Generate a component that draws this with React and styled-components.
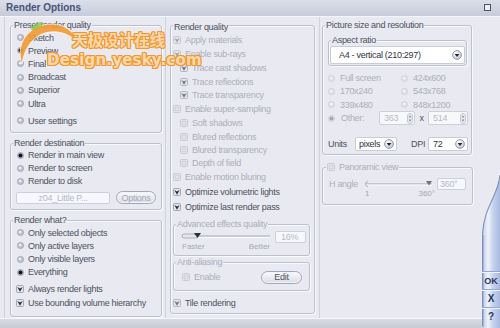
import React from 'react';
import styled, { createGlobalStyle } from 'styled-components';

const C = {
  bg: '#e9eaf1',
  text: '#4d515e',
  dis: '#abaebb',
};

const GlobalStyle = createGlobalStyle`
  html, body { margin: 0; padding: 0; background: ${C.bg}; }
  body { font-family: "Liberation Sans", Arial, sans-serif; }
`;

const Window = styled.div`
  position: relative;
  width: 500px;
  height: 328px;
  overflow: hidden;
  background: ${C.bg};
  display: flex;
  flex-direction: column;
  font-family: "Liberation Sans", Arial, sans-serif;
  font-size: 9px;
  letter-spacing: -0.3px;
  color: ${C.text};
`;

const TitleBar = styled.div`
  height: 17px;
  flex: none;
  box-sizing: border-box;
  display: flex;
  align-items: center;
  justify-content: space-between;
  padding: 0 9px 1px 6px;
  background: linear-gradient(#dcdfea, #c7cbda);
  border-bottom: 1px solid #f4f5f9;
`;

const Title = styled.span`
  font-size: 10px;
  font-weight: bold;
  letter-spacing: 0;
  color: #47527a;
`;

const Body = styled.div`
  flex: 1;
  display: flex;
  min-height: 0;
`;

const Content = styled.div`
  flex: 1;
  display: flex;
  flex-direction: column;
`;

const Columns = styled.div`
  flex: 1;
  display: flex;
  padding-left: 4px;
`;

const Column = styled.div`
  flex: none;
  width: ${(p) => p.$w}px;
  box-sizing: border-box;
  border-left: 1px solid #d0d2dc;
  padding: 8px ${(p) => p.$pr}px 0 ${(p) => p.$pl}px;
  display: flex;
  flex-direction: column;
`;

const BottomStrip = styled.div`
  flex: none;
  height: 9px;
  border-top: 1px solid #f6f7fa;
  background: linear-gradient(#d9dbe4, #c8cad5);
`;

const Group = styled.div`
  border: 1px solid #bdc0cd;
  border-radius: 3px;
  box-shadow: inset 1px 1px 0 #f8f9fb, 1px 1px 0 #f8f9fb;
  margin: ${(p) => p.$m || '0'};
  padding: ${(p) => p.$p || '0'};
`;

const Legend = styled.div`
  width: fit-content;
  height: 11px;
  line-height: 11px;
  margin: -6px 0 0 ${(p) => p.$ml ?? 2}px;
  padding: 0 1px;
  background: ${C.bg};
  color: ${(p) => (p.$dis ? C.dis : C.text)};
  white-space: nowrap;
  display: flex;
  align-items: center;
  gap: 4px;
`;

const Row = styled.div`
  display: flex;
  align-items: center;
  gap: ${(p) => p.$gap ?? 4}px;
  height: ${(p) => p.$h ?? 13}px;
  margin-top: ${(p) => p.$mt ?? 0}px;
  padding-left: ${(p) => p.$pl ?? 0}px;
  padding-right: ${(p) => p.$pr ?? 0}px;
  color: ${(p) => (p.$dis ? C.dis : C.text)};
  white-space: nowrap;
`;

const RadioGrid = styled.div`
  display: grid;
  grid-template-columns: 73px 1fr;
  grid-auto-rows: 13.3px;
  margin-top: 5.5px;
  padding-left: 5px;
`;

const Label = styled.span`
  flex: none;
  width: ${(p) => (p.$w ? p.$w + 'px' : 'auto')};
  margin-left: ${(p) => p.$ml ?? 0}px;
  text-align: ${(p) => p.$align || 'left'};
  color: ${(p) => (p.$dis ? C.dis : 'inherit')};
`;

const Field = styled.div`
  flex: none;
  box-sizing: border-box;
  width: ${(p) => p.$w}px;
  height: ${(p) => p.$h ?? 13}px;
  margin-top: ${(p) => p.$mt ?? 0}px;
  background: #f7f8fb;
  border: 1px solid #cdd0da;
  border-radius: 2px;
  display: flex;
  align-items: center;
  justify-content: ${(p) => (p.$center ? 'center' : 'space-between')};
  padding: 0 1px 0 ${(p) => p.$pl ?? 4}px;
  color: ${(p) => (p.$dis ? '#b6b9c4' : C.text)};
`;

const Select = styled.div`
  flex: none;
  box-sizing: border-box;
  width: ${(p) => (p.$w ? p.$w + 'px' : 'auto')};
  height: ${(p) => p.$h ?? 14}px;
  margin: ${(p) => p.$m || '0'};
  background: #ffffff;
  border: 1px solid #c9ccd7;
  border-radius: 2px;
  display: flex;
  align-items: center;
  justify-content: space-between;
  padding: 0 2px 0 ${(p) => p.$pl ?? 4}px;
  color: #30343f;
`;

const Pill = styled.div`
  flex: none;
  box-sizing: border-box;
  width: ${(p) => p.$w}px;
  height: 13px;
  border-radius: 7px;
  border: 1px solid #a2a7b7;
  background: linear-gradient(#fbfbfd, #d9dce6);
  box-shadow: inset 0 0 0 1px #f3f4f8;
  display: flex;
  align-items: center;
  justify-content: center;
  margin-left: ${(p) => (p.$auto ? 'auto' : '0')};
  color: ${(p) => (p.$dis ? '#a5a8b5' : '#50545f')};
`;

const AdvGrid = styled.div`
  display: flex;
  align-items: flex-start;
  gap: 3px;
  padding: 0 5px 4px 6px;
`;

const SliderArea = styled.div`
  flex: none;
  width: ${(p) => p.$w}px;
  display: flex;
  flex-direction: column;
`;

const SliderLabels = styled.div`
  display: flex;
  justify-content: space-between;
  height: ${(p) => p.$h ?? 9}px;
  line-height: ${(p) => p.$h ?? 9}px;
  padding: 0 ${(p) => p.$pad ?? 2}px;
  font-size: 8px;
  letter-spacing: 0;
  color: #a4a7b4;
`;

const HRow = styled.div`
  display: flex;
  align-items: flex-start;
  margin-top: 5px;
  padding: 0 0 6px 6px;
  color: ${C.dis};
`;

const HLabel = styled.span`
  flex: none;
  width: 34px;
  height: 12px;
  line-height: 12px;
`;

const SideBar = styled.div`
  flex: none;
  width: 18px;
  display: flex;
  flex-direction: column;
`;

const BarTop = styled.svg`
  display: block;
  flex: none;
  margin-top: auto;
  width: 18px;
  height: 60px;
`;

const BarBody = styled.div`
  flex: none;
  height: 93px;
  box-sizing: border-box;
  padding-bottom: 3px;
  display: flex;
  flex-direction: column;
  justify-content: flex-end;
  background: linear-gradient(90deg, #7f92bd 0, #7f92bd 1px, #c8d4ec 2px, #eef3fb 6px, #c6d3ed 11px, #a8bae0 18px);
  border-bottom-left-radius: 3px;
`;

const BarButton = styled.div`
  height: 18px;
  box-sizing: border-box;
  display: flex;
  align-items: center;
  justify-content: center;
  font-weight: bold;
  font-size: ${(p) => p.$fs ?? 9}px;
  letter-spacing: 0;
  color: #2b3961;
  border-top: 1px solid #95a7cf;
  box-shadow: inset 0 1px 0 #f2f5fc;
`;

const IconSvg = styled.svg`
  display: block;
  flex: none;
  width: ${(p) => p.$w}px;
  height: ${(p) => p.$h}px;
`;

const Watermark = styled.div`
  position: absolute;
  left: 0;
  top: 0;
  width: 200px;
  height: 80px;
  pointer-events: none;
  letter-spacing: 0;
`;

const WmSwoosh = styled.svg`
  position: absolute;
  left: 0;
  top: 0;
`;

const WmText = styled.div`
  position: absolute;
  left: ${(p) => p.$x}px;
  top: ${(p) => p.$y}px;
  font-family: ${(p) => (p.$cn ? '"Noto Sans CJK SC", sans-serif' : '"DejaVu Sans", sans-serif')};
  font-weight: bold;
  font-size: ${(p) => p.$fs}px;
  line-height: 1;
  letter-spacing: ${(p) => p.$ls ?? 0}px;
  color: #fbd9ad;
  text-shadow: 1px 0 0 #f2972e, -1px 0 0 #f2972e, 0 1px 0 #f2972e, 0 -1px 0 #f2972e,
    1px 1px 0 #f2972e, -1px -1px 0 #f2972e, 1px -1px 0 #f2972e, -1px 1px 0 #f2972e;
  white-space: nowrap;
`;

function Radio({ checked, dis }) {
  return (
    <IconSvg $w={7} $h={7} viewBox="0 0 8 8">
      <circle cx="4" cy="4" r="3.5" fill={dis ? '#dfe1e8' : '#bfc3ce'} stroke={dis ? '#c8cbd5' : '#959aab'} strokeWidth="0.8" />
      {checked ? (
        <circle cx="4" cy="4" r="2.3" fill={dis ? '#a3a7b4' : '#12151f'} />
      ) : (
        <circle cx="3.4" cy="3.4" r="1.5" fill={dis ? '#f3f4f7' : '#eef0f4'} />
      )}
    </IconSvg>
  );
}

const TONES = {
  dark: { mark: '#262a38', box: '#9aa0b0' },
  mid: { mark: '#6d7180', box: '#aeb2bf' },
  light: { mark: '#9da1ae', box: '#c3c6d0' },
};

function Check({ checked, tone = 'dark' }) {
  const t = TONES[tone];
  return (
    <IconSvg $w={8} $h={8} viewBox="0 0 8 8">
      <rect x="0.5" y="0.5" width="7" height="7" rx="1" fill={checked ? '#e2e4ea' : '#e4e6ec'} stroke={checked ? t.box : '#c4c7d1'} strokeWidth="0.9" />
      {checked ? (
        <path d="M1.3 2 L4 3.5 L6.7 2 L4 6.8 Z" fill={t.mark} />
      ) : (
        <rect x="2.2" y="2.2" width="3.6" height="3.6" fill="none" stroke="#c9ccd5" strokeWidth="0.8" />
      )}
    </IconSvg>
  );
}

function Drop() {
  return (
    <IconSvg $w={10} $h={10} viewBox="0 0 10 10">
      <defs>
        <radialGradient id="dropg" cx="0.35" cy="0.3" r="0.8">
          <stop offset="0" stopColor="#ffffff" />
          <stop offset="1" stopColor="#bfc4d2" />
        </radialGradient>
      </defs>
      <circle cx="5" cy="5" r="4.4" fill="url(#dropg)" stroke="#7d8398" strokeWidth="0.8" />
      <path d="M2.7 4 H7.3 L5 6.9 Z" fill="#1e2332" />
    </IconSvg>
  );
}

function Spin() {
  return (
    <IconSvg $w={6} $h={11} viewBox="0 0 6 11">
      <rect x="0.5" y="0.5" width="5" height="10" rx="2.5" fill="#eceef3" stroke="#b9bcc8" strokeWidth="0.8" />
      <path d="M1.6 4.6 L3 2.3 L4.4 4.6 Z M1.6 6.4 L3 8.7 L4.4 6.4 Z" fill="#878b9a" />
    </IconSvg>
  );
}

function AdvSlider() {
  return (
    <IconSvg $w={92} $h={12} viewBox="0 0 92 12">
      <rect x="2" y="5" width="88" height="2" fill="#c8cbd5" />
      <rect x="2" y="7" width="88" height="1" fill="#fafbfc" />
      <rect x="2" y="4" width="16" height="4" rx="2" fill="#e4e6ec" stroke="#9da1af" strokeWidth="0.8" />
      <path d="M14 3 H21 L17.5 8 Z" fill="#2a2e3c" />
    </IconSvg>
  );
}

function HSlider() {
  return (
    <IconSvg $w={73} $h={12} viewBox="0 0 73 12">
      <rect x="3" y="5" width="66" height="1.6" fill="#c4c7d1" />
      <rect x="3" y="6.6" width="66" height="1" fill="#fafbfc" />
      <path d="M5 3.5 A2.5 2.5 0 1 0 5 8.5" fill="none" stroke="#a9acb8" strokeWidth="0.9" />
      <path d="M63 3 H69 L66 7.5 Z" fill="#6e7282" />
    </IconSvg>
  );
}

function WindowIcon() {
  return (
    <IconSvg $w={7} $h={7} viewBox="0 0 7 7">
      <rect x="0.5" y="0.5" width="6" height="6" fill="#eef0f5" stroke="#4c5166" strokeWidth="1" />
    </IconSvg>
  );
}

function Swoosh() {
  return (
    <WmSwoosh width="90" height="70" viewBox="0 0 90 70">
      <path
        d="M22 64 C15 46 27 24 52 24 C64 24 74 31 78 42 C70 35 61 31 51 32 C35 33 25 46 22 64 Z"
        fill="#f39b34"
        stroke="#ffffff"
        strokeWidth="0.8"
        opacity="0.9"
      />
      <ellipse cx="37" cy="26" rx="7" ry="2.6" transform="rotate(-28 37 26)" fill="#8cc63f" opacity="0.75" />
    </WmSwoosh>
  );
}

const PRESETS = ['Sketch', 'Preview', 'Final', 'Broadcast', 'Superior', 'Ultra'];

const QUALITY = [
  { t: 'Apply materials', h: 14, c: true, tone: 'light', dis: true },
  { t: 'Enable sub-rays', h: 14, c: true, tone: 'light', dis: true },
  { t: 'Trace cast shadows', h: 14, c: true, tone: 'mid', dis: true, ind: true },
  { t: 'Trace reflections', h: 13, c: true, tone: 'mid', dis: true, ind: true },
  { t: 'Trace transparency', h: 14, c: true, tone: 'mid', dis: true, ind: true },
  { t: 'Enable super-sampling', h: 14, c: false, dis: true },
  { t: 'Soft shadows', h: 14, c: false, dis: true, ind: true },
  { t: 'Blured reflections', h: 13, c: false, dis: true, ind: true },
  { t: 'Blured transparency', h: 13, c: false, dis: true, ind: true },
  { t: 'Depth of field', h: 13, c: false, dis: true, ind: true },
  { t: 'Enable motion bluring', h: 15, c: false, dis: true },
  { t: 'Optimize volumetric lights', h: 15, c: true, tone: 'dark' },
  { t: 'Optimize last render pass', h: 15, c: true, tone: 'dark' },
];

const SIZES = [
  ['Full screen', '424x600'],
  ['170x240', '543x768'],
  ['339x480', '848x1200'],
];

export default function App() {
  return (
    <>
      <GlobalStyle />
      <Window>
        <TitleBar>
          <Title>Render Options</Title>
          <WindowIcon />
        </TitleBar>
        <Body>
          <Content>
            <Columns>
              <Column $w={161} $pl={5} $pr={3}>
                <Group $p="0 0 4.6px 0">
                  <Legend>Preset render quality</Legend>
                  {PRESETS.map((p) => (
                    <Row key={p} $h={13.2} $pl={6}>
                      <Radio checked={p === 'Preview'} />
                      {p}
                    </Row>
                  ))}
                  <Row $h={13.2} $mt={4} $pl={6}>
                    <Radio />
                    User settings
                  </Row>
                </Group>

                <Group $m="10px 0 0 0" $p="0 0 5px 0">
                  <Legend>Render destination</Legend>
                  <Row $pl={6}>
                    <Radio checked />
                    Render in main view
                  </Row>
                  <Row $pl={6}>
                    <Radio />
                    Render to screen
                  </Row>
                  <Row $pl={6}>
                    <Radio />
                    Render to disk
                  </Row>
                  <Row $h={12} $mt={4} $pl={5} $pr={5} $gap={6}>
                    <Field $w={94} $h={12} $center $pl={1} $dis>
                      z04_Little P...
                    </Field>
                    <Pill $w={40} $dis $auto>
                      Options
                    </Pill>
                  </Row>
                </Group>

                <Group $m="10px 0 0 0" $p="0 0 6px 0">
                  <Legend>Render what?</Legend>
                  {['Only selected objects', 'Only active layers', 'Only visible layers', 'Everything'].map((t) => (
                    <Row key={t} $h={13.3} $pl={6}>
                      <Radio checked={t === 'Everything'} />
                      {t}
                    </Row>
                  ))}
                  <Row $h={14} $mt={3} $pl={5}>
                    <Check checked />
                    Always render lights
                  </Row>
                  <Row $h={14} $pl={5}>
                    <Check checked />
                    Use bounding volume hierarchy
                  </Row>
                </Group>
              </Column>

              <Column $w={154} $pl={4} $pr={4}>
                <Group $p="2px 0 3px 0">
                  <Legend>Render quality</Legend>
                  {QUALITY.map((q) => (
                    <Row key={q.t} $h={q.h} $pl={q.ind ? 9 : 2} $dis={q.dis}>
                      <Check checked={q.c} tone={q.tone} />
                      {q.t}
                    </Row>
                  ))}
                  <Group $m="10px 4px 0 2px">
                    <Legend $dis>Advanced effects quality</Legend>
                    <AdvGrid>
                      <SliderArea $w={92}>
                        <AdvSlider />
                        <SliderLabels>
                          <span>Faster</span>
                          <span>Better</span>
                        </SliderLabels>
                      </SliderArea>
                      <Field $w={31} $h={12} $pl={5} $mt={1} $dis>
                        16%
                      </Field>
                    </AdvGrid>
                  </Group>
                  <Group $m="6px 4px 0 2px" $p="0 0 4px 0">
                    <Legend $dis>Anti-aliasing</Legend>
                    <Row $h={18} $pl={8} $pr={7} $dis>
                      <Check />
                      Enable
                      <Pill $w={41} $auto>
                        Edit
                      </Pill>
                    </Row>
                  </Group>
                  <Row $h={14} $mt={5} $pl={2}>
                    <Check checked tone="mid" />
                    Tile rendering
                  </Row>
                </Group>
              </Column>

              <Column $w={163} $pl={2} $pr={10}>
                <Group $p="0 0 3.5px 0">
                  <Legend>Picture size and resolution</Legend>
                  <Group $m="9px 4px 0 5px" $p="0 1px 1px 1px">
                    <Legend $ml={1}>Aspect ratio</Legend>
                    <Select $h={18} $pl={8}>
                      A4 - vertical (210:297)
                      <Drop />
                    </Select>
                  </Group>
                  <RadioGrid>
                    {SIZES.flat().map((s) => (
                      <Row key={s} $h={13.3} $gap={5} $dis>
                        <Radio dis />
                        {s}
                      </Row>
                    ))}
                  </RadioGrid>
                  <Row $h={14} $pl={5} $gap={0}>
                    <Radio checked dis />
                    <Label $w={38} $ml={6} $dis>
                      Other:
                    </Label>
                    <Field $w={36} $h={14} $dis>
                      363
                      <Spin />
                    </Field>
                    <Label $w={13} $align="center">
                      x
                    </Label>
                    <Field $w={40} $h={14} $dis>
                      514
                      <Spin />
                    </Field>
                  </Row>
                  <Row $h={14} $mt={11.3} $pl={5} $gap={0}>
                    <Label $w={27}>Units</Label>
                    <Select $w={42} $h={14} $pl={3}>
                      pixels
                      <Drop />
                    </Select>
                    <Label $w={17} $ml={14}>
                      DPI
                    </Label>
                    <Select $w={40} $h={14} $pl={4}>
                      72
                      <Drop />
                    </Select>
                  </Row>
                </Group>

                <Group $m="11.5px -1px 0 0">
                  <Legend $dis $ml={3}>
                    <Check />
                    Panoramic view
                  </Legend>
                  <HRow>
                    <HLabel>H angle</HLabel>
                    <SliderArea $w={74}>
                      <HSlider />
                      <SliderLabels $h={8} $pad={2}>
                        <span>1</span>
                        <span>360°</span>
                      </SliderLabels>
                    </SliderArea>
                    <Field $w={29} $h={12} $pl={2} $dis>
                      360°
                    </Field>
                  </HRow>
                </Group>
              </Column>
            </Columns>
            <BottomStrip />
          </Content>

          <SideBar>
            <BarTop viewBox="0 0 18 60">
              <defs>
                <linearGradient id="barg" x1="0" y1="0" x2="1" y2="0">
                  <stop offset="0" stopColor="#c8d4ec" />
                  <stop offset="0.33" stopColor="#eef3fb" />
                  <stop offset="0.6" stopColor="#c6d3ed" />
                  <stop offset="1" stopColor="#a8bae0" />
                </linearGradient>
              </defs>
              <path d="M18 0 C16 22 2 30 0.5 60 L18 60 Z" fill="url(#barg)" />
              <path d="M18 0 C16 22 2 30 0.5 60" fill="none" stroke="#7f92bd" strokeWidth="1.1" />
            </BarTop>
            <BarBody>
              <BarButton>OK</BarButton>
              <BarButton $fs={10}>X</BarButton>
              <BarButton $fs={10}>?</BarButton>
            </BarBody>
          </SideBar>
        </Body>

        <Watermark>
          <Swoosh />
          <WmText $cn $x={72} $y={32} $fs={15.5}>
            天极设计在线
          </WmText>
          <WmText $x={47} $y={53} $fs={15} $ls={0.2}>
            Design.yesky.com
          </WmText>
        </Watermark>
      </Window>
    </>
  );
}
